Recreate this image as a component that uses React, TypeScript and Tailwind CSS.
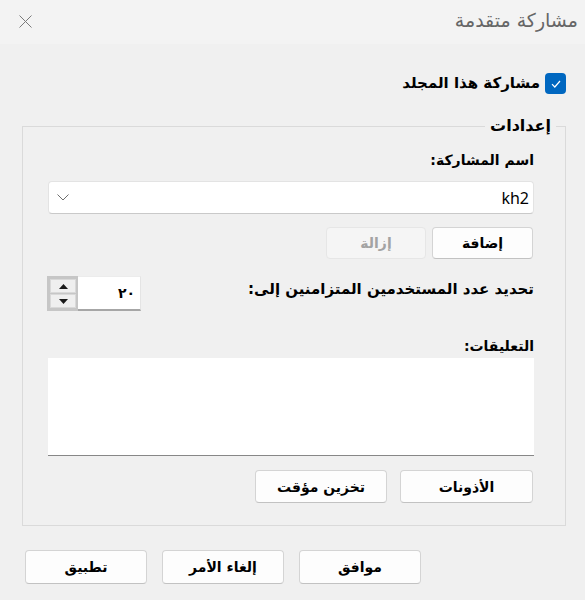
import React from 'react';

const Btn: React.FC<{ label: string; w: string; disabled?: boolean }> = ({ label, w, disabled }) => (
  <button
    className={`${w} h-full rounded-[4px] border text-[14px] font-bold leading-none ${
      disabled
        ? 'bg-[#f5f5f5] border-[#e6e6e6] text-[#a3a3a3]'
        : 'bg-[#fdfdfd] border-[#d4d4d4] border-b-[#c2c2c2] text-black'
    }`}
  >
    {label}
  </button>
);

const Triangle: React.FC<{ up?: boolean }> = ({ up }) => (
  <svg width="9" height="5" viewBox="0 0 9 5">
    <path d={up ? 'M0 5 L4.5 0 L9 5 Z' : 'M0 0 L4.5 5 L9 0 Z'} fill="#1a1a1a" />
  </svg>
);

const App: React.FC = () => {
  return (
    <div dir="rtl" className="w-[585px] h-[600px] bg-[#f0f0f0] text-black overflow-hidden font-['DejaVu_Sans',sans-serif]">
      {/* Title bar */}
      <div className="h-[44px] bg-[#f3f3f3] flex items-center justify-between pr-[7px] pl-[19px]">
        <span className="text-[19px] text-[#666666] leading-none mb-[3px]">مشاركة متقدمة</span>
        <svg width="13" height="13" viewBox="0 0 13 13" className="mb-[2px]">
          <path d="M0.5 0.5 L12.5 12.5 M12.5 0.5 L0.5 12.5" stroke="#7a7a7a" strokeWidth="1" />
        </svg>
      </div>

      <div className="pt-[29px] pr-[19px] pl-[22px]">
        {/* Share checkbox */}
        <label className="flex items-center gap-[5px] h-[21px]">
          <span className="w-[21px] h-[21px] rounded-[4px] bg-[#0067c0] flex items-center justify-center">
            <svg width="10" height="8" viewBox="0 0 10 8">
              <path d="M1 4.2 L3.8 7 L9 1" stroke="#fff" strokeWidth="1.2" fill="none" />
            </svg>
          </span>
          <span className="text-[15px] font-bold leading-none">مشاركة هذا المجلد</span>
        </label>

        {/* Settings group */}
        <fieldset className="mt-[23px] border border-[#dadada] pr-[31px] pl-[25px] pb-[22px] pt-[16px]">
          <legend className="-mr-[22px] px-[5px] text-[16px] font-bold leading-[18px]">إعدادات</legend>

          <div className="text-[14px] font-bold leading-[18px]">اسم المشاركة:</div>

          <div className="mt-[12px] h-[33px] bg-white border border-[#e3e3e3] border-b-[#c9c9c9] rounded-[4px] flex items-center justify-between pr-[4px] pl-[8px]">
            <span className="text-[16px] font-['Noto_Sans',sans-serif]">kh2</span>
            <svg width="12" height="7" viewBox="0 0 12 7">
              <path d="M0.5 0.5 L6 6 L11.5 0.5" stroke="#6e6e6e" strokeWidth="1" fill="none" />
            </svg>
          </div>

          <div className="mt-[13px] h-[32px] flex gap-[6px] pr-[1px]">
            <Btn label="إضافة" w="w-[101px]" />
            <Btn label="إزالة" w="w-[100px]" disabled />
          </div>

          <div className="mt-[17px] h-[35px] flex items-center justify-between">
            <span className="text-[15px] font-bold leading-[18px] pb-[10px]">تحديد عدد المستخدمين المتزامنين إلى:</span>
            <div dir="ltr" className="w-[94px] h-full flex -ml-[1px]">
              <div className="w-[31px] h-full bg-[#c6c6c6] p-[3px] pr-[2px] flex flex-col gap-[1px]">
                <div className="flex-1 bg-[#efefef] border border-[#d9d9d9] flex items-center justify-center">
                  <Triangle up />
                </div>
                <div className="flex-1 bg-[#efefef] border border-[#d9d9d9] flex items-center justify-center">
                  <Triangle />
                </div>
              </div>
              <div className="flex-1 h-full bg-white border-t-[1px] border-t-[#ececec] border-b-2 border-b-[#a6a6a6] border-r border-r-[#e4e4e4] flex items-center justify-end pr-[5px]">
                <span dir="rtl" className="text-[14px] font-bold">٢٠</span>
              </div>
            </div>
          </div>

          <div className="mt-[26px] text-[14px] font-bold leading-[18px]">التعليقات:</div>

          <div className="mt-[3px] h-[98px] bg-white border-b-[1.5px] border-b-[#878787]" />

          <div className="mt-[14px] h-[33px] flex gap-[13px] pr-[1px]">
            <Btn label="الأذونات" w="w-[133px]" />
            <Btn label="تخزين مؤقت" w="w-[132px]" />
          </div>
        </fieldset>

        {/* Dialog buttons */}
        <div className="mt-[24px] h-[34px] flex justify-end gap-[15px] pl-[3px]">
          <Btn label="موافق" w="w-[122px]" />
          <Btn label="إلغاء الأمر" w="w-[122px]" />
          <Btn label="تطبيق" w="w-[122px]" />
        </div>
      </div>
    </div>
  );
};

export default App;
